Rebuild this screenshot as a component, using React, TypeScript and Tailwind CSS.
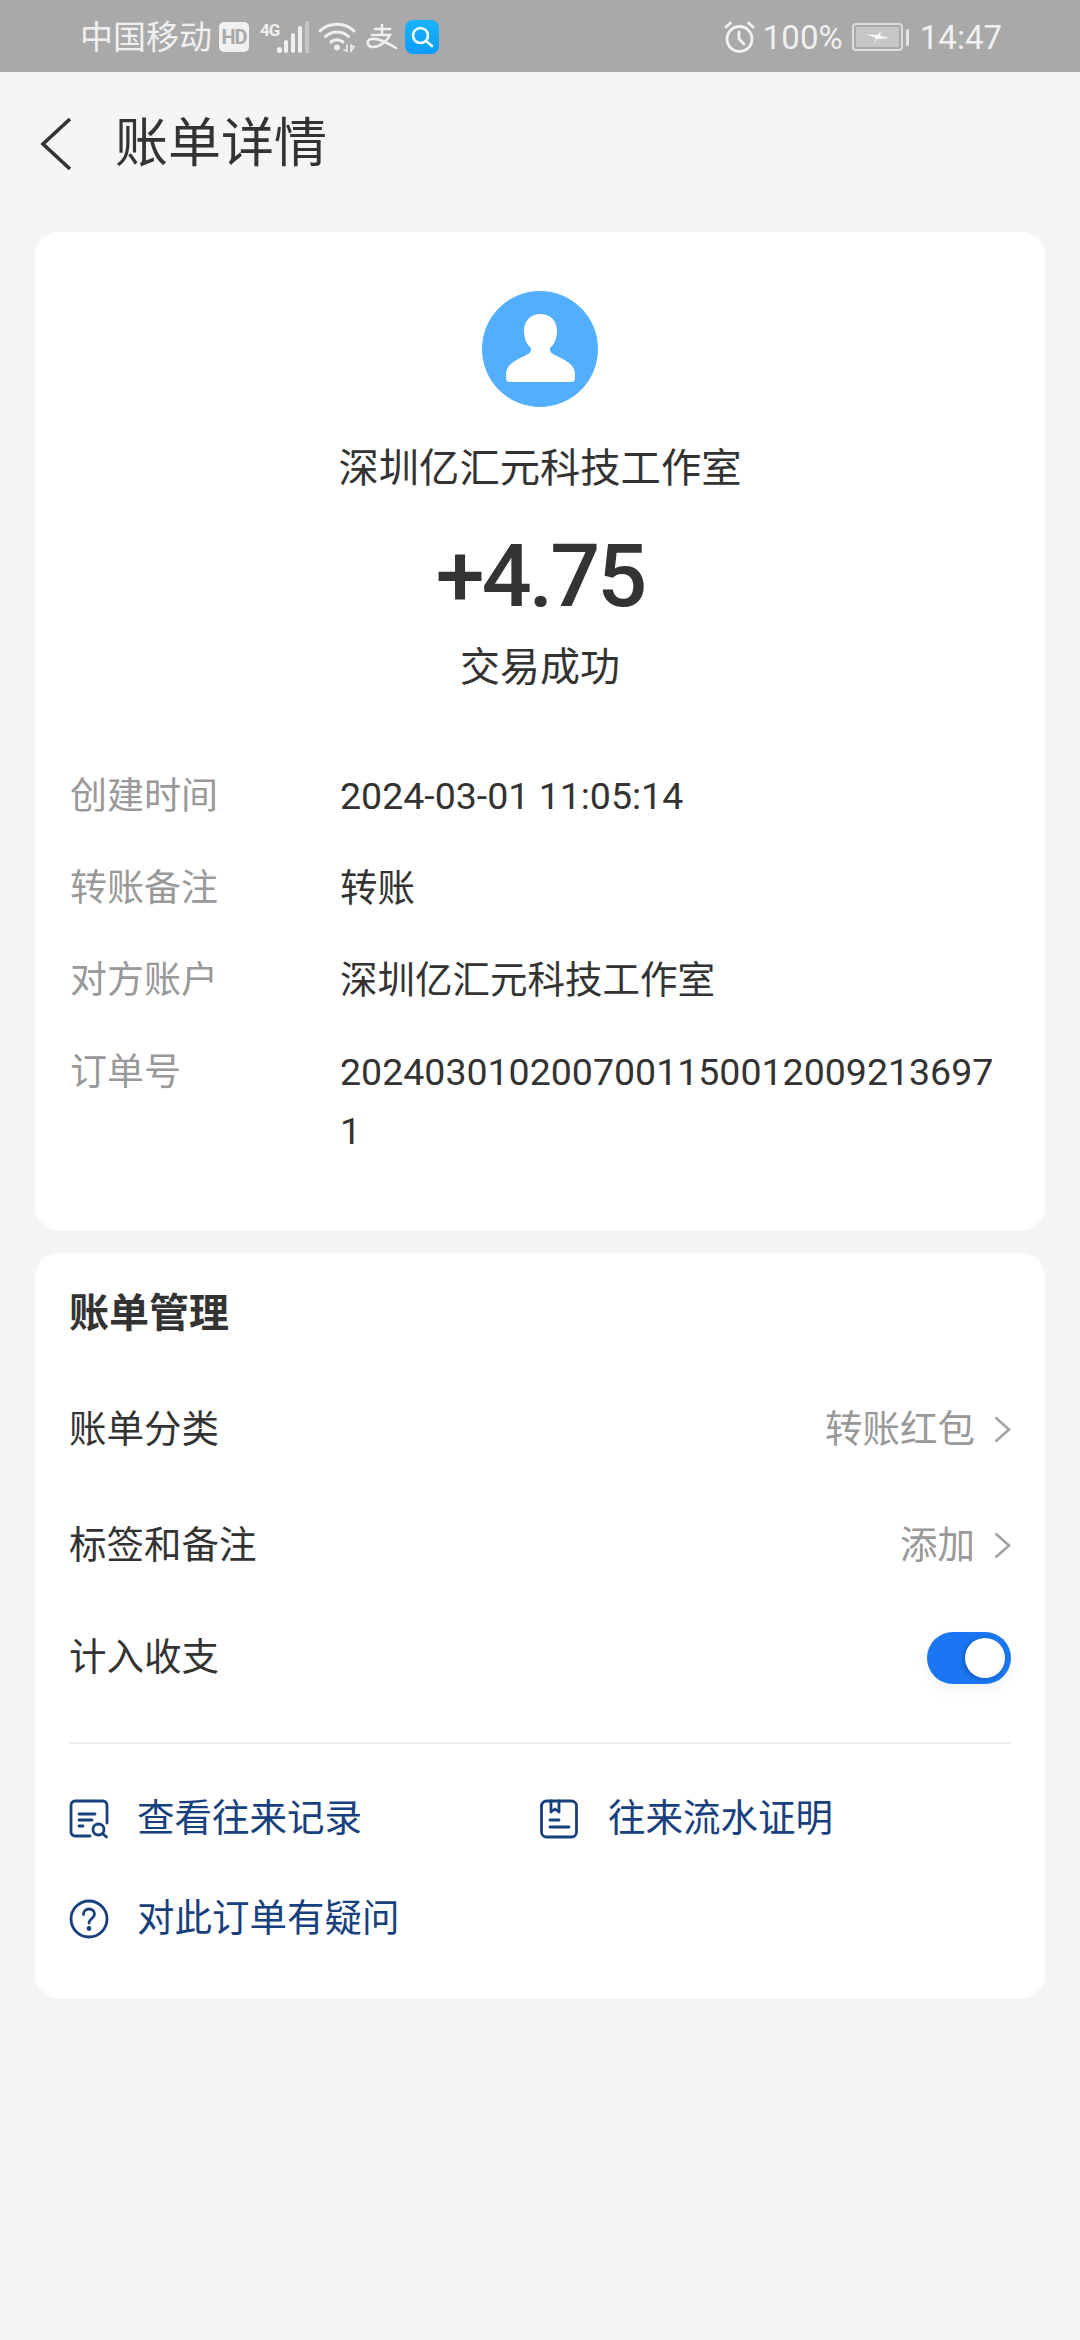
import React from 'react';

const FONT = 'font-["Roboto","Noto_Sans_CJK_SC",sans-serif]';

function Alarm() {
  return (
    <svg width="31" height="32" viewBox="0 0 31 32" fill="none" stroke="#f2f2f2" strokeWidth="2.8" strokeLinecap="round">
      <circle cx="15.500" cy="18" r="12.500" />
      <path d="M15 11v7l5 5" />
      <path d="M2 6l4.500-4M29 6l-4.500-4" />
    </svg>
  );
}

function Battery() {
  return (
    <div className="flex items-center gap-[3px]">
      <div className="relative flex h-[28px] w-[51px] items-center justify-center rounded-[4px] border-2 border-[#dcdcdc] p-[2px]">
        <div className="h-full w-full rounded-[1px] bg-[#c6c6c6]" />
        <svg className="absolute left-[12px] top-[6px]" width="24" height="12" viewBox="0 0 24 12" fill="#fafafa">
          <path d="M0 3.500L12 4 15 0 14 5 24 7 11 8 8 12 10 7z" />
        </svg>
      </div>
      <div className="h-[17px] w-[3px] rounded-full bg-[#e6e6e6]" />
    </div>
  );
}

function StatusBar() {
  return (
    <div className="flex h-[72px] items-center justify-between bg-[#a9a9a9] pl-[80px] pr-[78px] pt-[2px] text-[33px] leading-none text-[#f0f0f0]">
      <div className="flex items-center">
        <span className="w-[139px]">中国移动</span>
        <span className="flex h-[30px] w-[30px] items-center justify-center rounded-[5px] bg-[#f0f0f0] text-[20px] font-bold tracking-[-1px] text-[#a9a9a9]">HD</span>
        <div className="relative ml-[11px] h-[34px] w-[49px]">
          <span className="absolute left-0 top-[2px] text-[17px] font-bold tracking-[-1px]">4G</span>
          <svg className="absolute left-0 top-0" width="49" height="34" viewBox="0 0 49 34">
            <rect x="17" y="27" width="5" height="6" rx="2.500" fill="#f0f0f0" />
            <rect x="24" y="20" width="4" height="13" rx="2" fill="#f0f0f0" />
            <rect x="31" y="13" width="4" height="20" rx="2" fill="#f0f0f0" />
            <rect x="38" y="6" width="4" height="27" rx="2" fill="#f0f0f0" />
            <rect x="45" y="1" width="4" height="32" rx="1" fill="#c4c4c4" />
          </svg>
        </div>
        <svg className="ml-[9px]" width="38" height="34" viewBox="0 0 38 34" fill="none" stroke="#f0f0f0" strokeWidth="3" strokeLinecap="round">
          <path d="M2 11c9-9 25-9 34 0" />
          <path d="M7.500 16.500c6.500-6 16.500-6 23 0" />
          <path d="M13 22c3.500-3 8.500-3 12 0" />
          <circle cx="19" cy="27.500" r="2.500" fill="#f0f0f0" strokeWidth="1" />
          <path d="M29 25v6l-3-1M33 25l3 2-3 4z" strokeWidth="1.500" />
        </svg>
        <svg className="ml-[10px]" width="31" height="26" viewBox="0 0 31 26" fill="none" stroke="#f0f0f0" strokeWidth="2.600" strokeLinecap="round">
          <path d="M9 5H24M16 1v10M6 11H24C21 17 14 23 7 23 1 23 0 16 5 15 11 14 22 19 30 24" />
        </svg>
        <div className="ml-[8px] flex h-[34px] w-[34px] items-center justify-center rounded-[8px] bg-gradient-to-b from-[#1bb4fb] to-[#0a9bfd]">
          <svg width="24" height="24" viewBox="0 0 24 24" fill="none" stroke="#f4fbff" strokeWidth="2.600" strokeLinecap="round">
            <circle cx="10.500" cy="10.500" r="7.500" />
            <path d="M16 16l6 5" />
          </svg>
        </div>
      </div>
      <div className="flex items-center">
        <Alarm />
        <span className="ml-[8px] w-[89px]">100%</span>
        <Battery />
        <span className="ml-[11px]">14:47</span>
      </div>
    </div>
  );
}

function Row({ label, children }: { label: string; children: React.ReactNode }) {
  return (
    <div className="flex leading-[59px]">
      <div className="w-[270px] shrink-0 text-[37px] text-[#999999]">{label}</div>
      <div className="w-[670px] break-all text-[37.500px] text-[#333333]">{children}</div>
    </div>
  );
}

function Chevron() {
  return (
    <svg width="17" height="27" viewBox="0 0 17 27" fill="none" stroke="#a3a3a3" strokeWidth="2.600">
      <path d="M1.500 1.500L15 13.500 1.500 25.500" />
    </svg>
  );
}

function RecordIcon() {
  return (
    <svg width="40" height="40" viewBox="0 0 40 40" fill="none" stroke="#17407e" strokeWidth="2.800" strokeLinecap="round">
      <path d="M21 37H6a4 4 0 0 1-4-4V6a4 4 0 0 1 4-4h28a4 4 0 0 1 4 4v18" />
      <path d="M10 15h16M10 21h13M10 27h4" />
      <circle cx="29.500" cy="30.500" r="5.500" />
      <path d="M33.500 34.500l4 3.500" />
    </svg>
  );
}

function ProofIcon() {
  return (
    <svg width="38" height="40" viewBox="0 0 38 40" fill="none" stroke="#17407e" strokeWidth="2.800" strokeLinecap="round" strokeLinejoin="round">
      <rect x="1.500" y="2" width="35" height="36" rx="5" />
      <path d="M11 2v11l4-3 4 3V2" />
      <path d="M10 21h9M10 28h19" />
    </svg>
  );
}

function HelpIcon() {
  return (
    <svg width="40" height="40" viewBox="0 0 40 40" fill="none" stroke="#17407e" strokeWidth="2.800" strokeLinecap="round">
      <circle cx="20" cy="20" r="18" />
      <path d="M14.500 15.500c0-3.500 2.500-5.500 5.500-5.500s5.500 2 5.500 5c0 4.500-5.500 4.500-5.500 9" />
      <circle cx="20" cy="29.500" r="1" fill="#17407e" />
    </svg>
  );
}

function LinkItem({ icon, text }: { icon: React.ReactNode; text: string }) {
  return (
    <div className="flex h-[100px] items-center">
      <div className="flex w-[68px] shrink-0">{icon}</div>
      <span className="text-[37.500px] leading-none text-[#17407e]">{text}</span>
    </div>
  );
}

export default function App() {
  return (
    <div className={`h-[2340px] w-[1080px] overflow-hidden bg-[#f5f5f5] ${FONT}`}>
      <StatusBar />

      {/* nav */}
      <div className="flex h-[144px] items-center pl-[40px]">
        <svg width="32" height="54" viewBox="0 0 32 54" fill="none" stroke="#333333" strokeWidth="3.600">
          <path d="M30 2L3 27l27 25" />
        </svg>
        <h1 className="ml-[43px] text-[53px] font-normal leading-none text-[#333333]">账单详情</h1>
      </div>

      {/* detail card */}
      <div className="mx-[35px] mt-[16px] rounded-[24px] bg-white pb-[69px] pt-[59px]">
        <div className="flex flex-col items-center text-[#333333]">
          <div className="flex h-[116px] w-[116px] items-center justify-center rounded-full bg-[#52afff]">
            <svg className="mb-[3px]" width="69" height="68" viewBox="0 0 69 68" fill="white">
              <path d="M34.500 0C44 0 51 6.500 51 16.500 51 24 48.500 30 45 33 43 35 44 38 46 39.500 53 44 69 48 69 60L69 64Q69 68 65 68L4 68Q0 68 0 64L0 60C0 48 16 44 23 39.500 25 38 26 35 24 33 20.500 30 18 24 18 16.500 18 6.500 25 0 34.500 0z" />
            </svg>
          </div>
          <div className="mt-[34px] text-[40.300px] leading-[56px]">深圳亿汇元科技工作室</div>
          <div className="mt-[27px] text-[88px] font-medium leading-[104px] tracking-[-3px]">+4.75</div>
          <div className="mt-[12px] text-[40px] leading-[56px]">交易成功</div>
        </div>
        <div className="mt-[71px] flex flex-col gap-[33px] pl-[35px]">
          <Row label="创建时间">2024-03-01 11:05:14</Row>
          <Row label="转账备注">转账</Row>
          <Row label="对方账户">深圳亿汇元科技工作室</Row>
          <Row label="订单号">2024030102007001150012009213697 1</Row>
        </div>
      </div>

      {/* manage card */}
      <div className="mx-[35px] mt-[23px] rounded-[24px] bg-white px-[34px] pb-[29px] pt-[36px]">
        <h2 className="text-[40px] font-bold leading-[50px] text-[#333333]">账单管理</h2>
        <div className="mt-[32px] flex h-[116px] items-center justify-between text-[37.500px] text-[#333333]">
          <span>账单分类</span>
          <div className="flex items-center gap-[19px] text-[#999999]">
            <span>转账红包</span>
            <Chevron />
          </div>
        </div>
        <div className="flex h-[116px] items-center justify-between text-[37.500px] text-[#333333]">
          <span>标签和备注</span>
          <div className="flex items-center gap-[19px] text-[#999999]">
            <span>添加</span>
            <Chevron />
          </div>
        </div>
        <div className="flex h-[108px] items-center justify-between text-[37.500px] text-[#333333]">
          <span>计入收支</span>
          <div className="mt-[2px] flex h-[52px] w-[84px] items-center justify-end rounded-full bg-[#1a76f2] pr-[6px] shadow-[0_6px_16px_rgba(0,0,0,0.05)]">
            <div className="h-[40px] w-[40px] rounded-full bg-white shadow-[-2px_1px_4px_rgba(0,0,0,0.25)]" />
          </div>
        </div>
        <div className="mt-[31px] h-[2px] bg-[#ececec]" />
        <div className="mt-[25px] grid w-[942px] grid-cols-2">
          <LinkItem icon={<RecordIcon />} text="查看往来记录" />
          <LinkItem icon={<ProofIcon />} text="往来流水证明" />
          <LinkItem icon={<HelpIcon />} text="对此订单有疑问" />
        </div>
      </div>
    </div>
  );
}
